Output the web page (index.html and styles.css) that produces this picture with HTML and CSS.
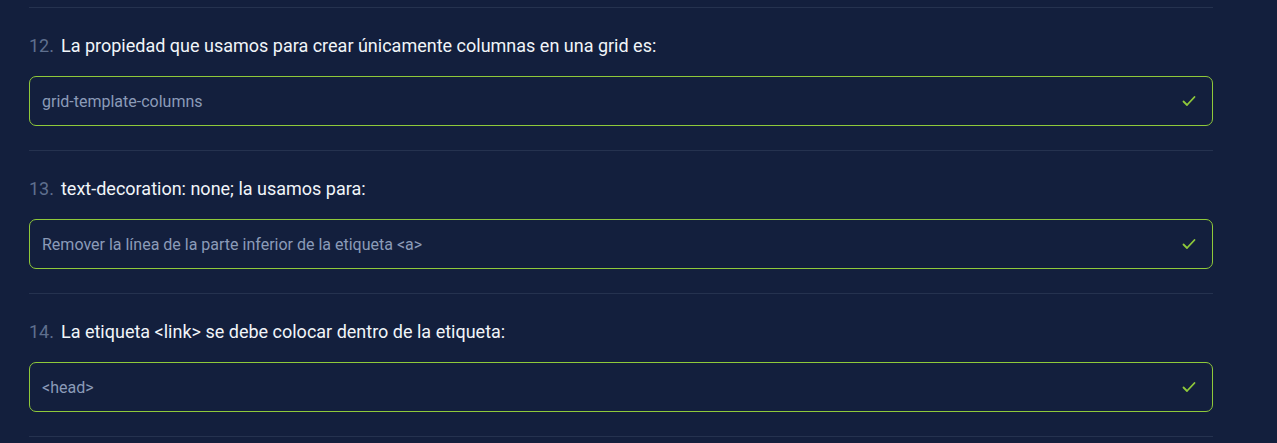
FILE: index.html
```html
<!DOCTYPE html>
<html lang="es">
<head>
<meta charset="utf-8">
<link rel="stylesheet" href="styles.css">
</head>
<body>
<div class="list">
  <div class="item">
    <div class="question"><span class="num">12.</span><span class="text">La propiedad que usamos para crear únicamente columnas en una grid es:</span></div>
    <div class="answer"><span>grid-template-columns</span>
      <svg class="check" width="16" height="16" viewBox="0 0 16 16"><path d="M2.5 8.5l3.5 3.5 7.5-8" fill="none" stroke="#8fc93a" stroke-width="1.8" stroke-linecap="round" stroke-linejoin="round"/></svg>
    </div>
  </div>
  <div class="item">
    <div class="question"><span class="num">13.</span><span class="text">text-decoration: none; la usamos para:</span></div>
    <div class="answer"><span>Remover la línea de la parte inferior de la etiqueta &lt;a&gt;</span>
      <svg class="check" width="16" height="16" viewBox="0 0 16 16"><path d="M2.5 8.5l3.5 3.5 7.5-8" fill="none" stroke="#8fc93a" stroke-width="1.8" stroke-linecap="round" stroke-linejoin="round"/></svg>
    </div>
  </div>
  <div class="item">
    <div class="question"><span class="num">14.</span><span class="text">La etiqueta &lt;link&gt; se debe colocar dentro de la etiqueta:</span></div>
    <div class="answer"><span>&lt;head&gt;</span>
      <svg class="check" width="16" height="16" viewBox="0 0 16 16"><path d="M2.5 8.5l3.5 3.5 7.5-8" fill="none" stroke="#8fc93a" stroke-width="1.8" stroke-linecap="round" stroke-linejoin="round"/></svg>
    </div>
  </div>
  <div class="end"></div>
</div>
</body>
</html>
```
FILE: styles.css
```css
html, body {
  margin: 0;
  padding: 0;
  background: #131f3d;
  height: 100%;
  overflow: hidden;
}
body {
  font-family: Roboto, "Liberation Sans", sans-serif;
}
.list {
  width: 1184px;
  margin-left: 29px;
  padding-top: 7px;
}
.item {
  border-top: 1px solid #25324f;
  padding: 26px 0 24px;
}
.end {
  border-top: 1px solid #25324f;
}
.question {
  display: flex;
  align-items: baseline;
  gap: 7px;
  line-height: 24px;
  height: 24px;
}
.num {
  color: #5f6f8e;
  font-size: 18px;
}
.text {
  color: #f1f5f9;
  font-size: 18px;
}
.answer {
  margin-top: 18px;
  height: 48px;
  border: 1px solid #8fc93a;
  border-radius: 7px;
  display: flex;
  align-items: center;
  justify-content: space-between;
  padding: 0 15px 0 12px;
  color: #8b9bb8;
  font-size: 16px;
}
.check {
  display: block;
}
```
